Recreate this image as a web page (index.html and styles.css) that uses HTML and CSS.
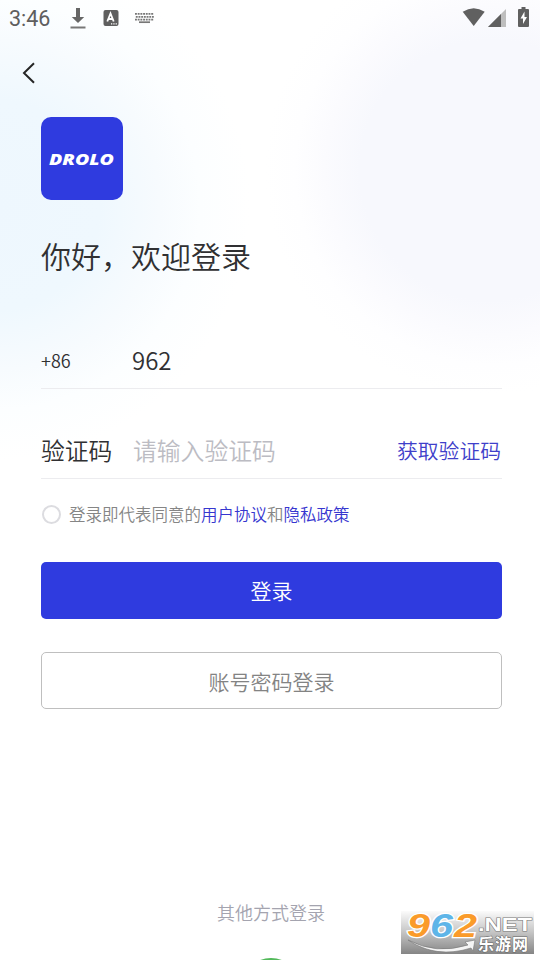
FILE: index.html
```html
<!DOCTYPE html>
<html lang="zh-CN">
<head>
<meta charset="utf-8">
<title>登录</title>
<link rel="stylesheet" href="styles.css">
</head>
<body>
<div class="screen">
  <header class="status">
    <span class="time">3:46</span>
    <svg class="download" width="16" height="22" viewBox="0 0 16 22"><path d="M6 1h4v9h4.200L8 16 1.800 10H6z" fill="#666"/><path d="M.5 20.500h15" stroke="#777" stroke-width="2"/></svg>
    <svg class="ime" width="16" height="18" viewBox="0 0 16 18"><rect x=".5" y="1" width="15" height="16" rx="2" fill="#5f5f5f"/><path d="M4.300 12.500 7.500 4.500l3.200 8M5.500 10h4" fill="none" stroke="#fff" stroke-width="1.800"/><path d="M8 14.800h6" stroke="#fff" stroke-width="1.300" stroke-dasharray="1.300 1"/></svg>
    <svg class="keyboard" width="19" height="12" viewBox="0 0 19 12"><g fill="none" stroke="#777" stroke-width="1.700"><path d="M0 1.800h19M.8 4.800h18M0 7.600h19" stroke-dasharray="1.900 .8"/><path d="M4 10.200h11"/></g></svg>
    <span class="spacer"></span>
    <svg class="wifi" width="24" height="20" viewBox="0 0 24 20"><path d="M.7 4.800Q11.700-2.500 22.700 4.800L11.700 19z" fill="#606060"/></svg>
    <svg class="signal" width="19" height="20" viewBox="0 0 19 20"><path d="M18 1v18H0z" fill="#bebebe"/><path d="M13 6v13H0z" fill="#606060"/></svg>
    <svg class="battery" width="12" height="21" viewBox="0 0 12 21"><path d="M3.500 0h4v2H10a1 1 0 0 1 1 1v16a1 1 0 0 1-1 1H1a1 1 0 0 1-1-1V3a1 1 0 0 1 1-1h2.500z" fill="#606060"/><path d="M6.500 4.500 2.500 11.500H5V17l4-7H6.500z" fill="#fff"/></svg>
  </header>
  <nav class="nav"><svg width="14" height="22" viewBox="0 0 14 22"><path d="M12 1.200 2 11l10 9.800" fill="none" stroke="#252525" stroke-width="2"/></svg></nav>
  <main class="content">
    <div class="logo"><svg width="82" height="83" viewBox="0 0 82 83"><text x="8" y="47.500" textLength="65" lengthAdjust="spacingAndGlyphs">DROLO</text></svg></div>
    <h1 class="title">你好，欢迎登录</h1>
    <div class="field phone"><span class="prefix">+86</span><span class="number">962</span></div>
    <div class="field code"><span class="label">验证码</span><span class="placeholder">请输入验证码</span><span class="get-code">获取验证码</span></div>
    <div class="agreement"><i class="radio"></i><span>登录即代表同意的<a>用户协议</a>和<a>隐私政策</a></span></div>
    <button class="btn primary">登录</button>
    <button class="btn outline">账号密码登录</button>
  </main>
  <footer class="other"><span>其他方式登录</span><i class="wechat"></i></footer>
  <div class="watermark">
    <svg width="133" height="43" viewBox="0 0 133 43">
      <g class="digits"><text x="6" y="26" textLength="23" lengthAdjust="spacingAndGlyphs" class="orange">9</text><text x="29" y="26" textLength="23" lengthAdjust="spacingAndGlyphs" class="blue">6</text><text x="53" y="26" textLength="23" lengthAdjust="spacingAndGlyphs" class="orange">2</text></g>
      <path d="M7 29Q35 44 67 34l-3-3 10-2-2 11-2-3Q35 48 7 29z" fill="#f5f5f5" stroke="#777" stroke-width=".6"/>
      <text x="77" y="20" textLength="54" lengthAdjust="spacingAndGlyphs" class="net">.NET</text>
      <text x="77" y="39" textLength="50" class="site">乐游网</text>
    </svg>
  </div>
</div>
</body>
</html>
```
FILE: styles.css
```css
* { box-sizing: border-box; }
body { margin: 0; }
.screen {
  position: relative;
  display: flex;
  flex-direction: column;
  width: 540px;
  height: 960px;
  overflow: hidden;
  font-family: "Noto Sans CJK SC", sans-serif;
  font-weight: 350;
  color: #303032;
  background:
    radial-gradient(circle at -5px 205px, #eef7fe 0, #eff8fe 105px, #f7fbfe 165px, #fcfeff 205px, rgba(255,255,255,0) 255px),
    radial-gradient(circle at 490px 170px, #f7f8fd 0, #f7f8fd 130px, #fbfbfe 165px, #fefeff 195px, rgba(255,255,255,0) 225px),
    #fff;
}
.screen > *, .status > svg { flex: none; }
.status { display: flex; align-items: flex-start; height: 37px; padding: 7px 10px 0 9px; }
.time { width: 61px; font: 400 21.5px/24px Roboto, sans-serif; color: #5e5e5e; }
.ime { margin: 2px 0 0 17px; }
.keyboard { margin: 5px 0 0 16px; }
.spacer { flex: 1; }
.wifi { margin-right: 2px; }
.signal { margin: 1px 11px 0 0; }
.nav { height: 80px; padding: 25px 0 0 22px; }
.nav svg, .logo svg, .watermark svg { display: block; }
.content { display: flex; flex-direction: column; padding: 0 38px 0 41px; }
.logo { width: 82px; height: 83px; border-radius: 10px; background: #2f3bdf; }
.logo text { font: italic 800 15px "Open Sans", sans-serif; fill: #fff; }
.title { margin: 30px 0 0; font-size: 30px; line-height: 50px; font-weight: 350; }
.field { display: flex; align-items: center; border-bottom: 1px solid #ececef; }
.phone { height: 56px; margin-top: 53px; padding-bottom: 2px; }
.prefix { width: 91px; font-size: 18px; }
.number { font-size: 24px; }
.code { height: 56px; margin-top: 34px; padding-bottom: 2px; }
.label { width: 92px; font-size: 23.8px; }
.placeholder { flex: 1; font-size: 23.8px; color: #bcbcc3; }
.get-code { margin-right: 1px; font-size: 20.8px; color: #3f3fca; }
.agreement { display: flex; align-items: center; gap: 8px; height: 30px; margin-top: 20px; padding-left: 1px; font-size: 16.5px; color: #858585; }
.agreement span { margin-top: -1px; }
.radio { width: 19px; height: 19px; border: 2px solid #dcdce0; border-radius: 50%; }
.agreement a { color: #3636cf; }
.btn { height: 57px; padding: 0; border: 0; border-radius: 5px; font: 350 21px/57px "Noto Sans CJK SC", sans-serif; }
.primary { margin-top: 33px; color: #fff; background: #2f3bdf; }
.outline { margin-top: 33px; border: 1px solid #bfbfbf; color: #838383; background: #fff; line-height: 55px; padding-top: 1px; }
.other { display: flex; flex-direction: column; align-items: center; margin-top: 188px; padding-left: 2px; font-size: 18px; line-height: 30px; color: #a4a4af; }
.wechat { flex: none; width: 60px; height: 60px; margin-top: 31px; border-radius: 50%; background: #52b95a; }
.watermark { position: absolute; left: 401px; top: 911px; width: 133px; height: 43px; background: linear-gradient(#fbfbfb, #c4c4c4 50%, #858585); }
.watermark svg { overflow: visible; }
.digits text { font: italic 700 33px "Liberation Sans", sans-serif; stroke: #fff; stroke-width: 2.500px; paint-order: stroke; }
.orange { fill: #fa9b2a; }
.blue { fill: #5eb5e8; }
.net { font: 700 18px "Liberation Sans", sans-serif; fill: #fff; stroke: #777; stroke-width: 1px; paint-order: stroke; }
.site { font: 700 16px "Noto Sans CJK SC", sans-serif; fill: #fff; stroke: #666; stroke-width: 1px; paint-order: stroke; }
```
